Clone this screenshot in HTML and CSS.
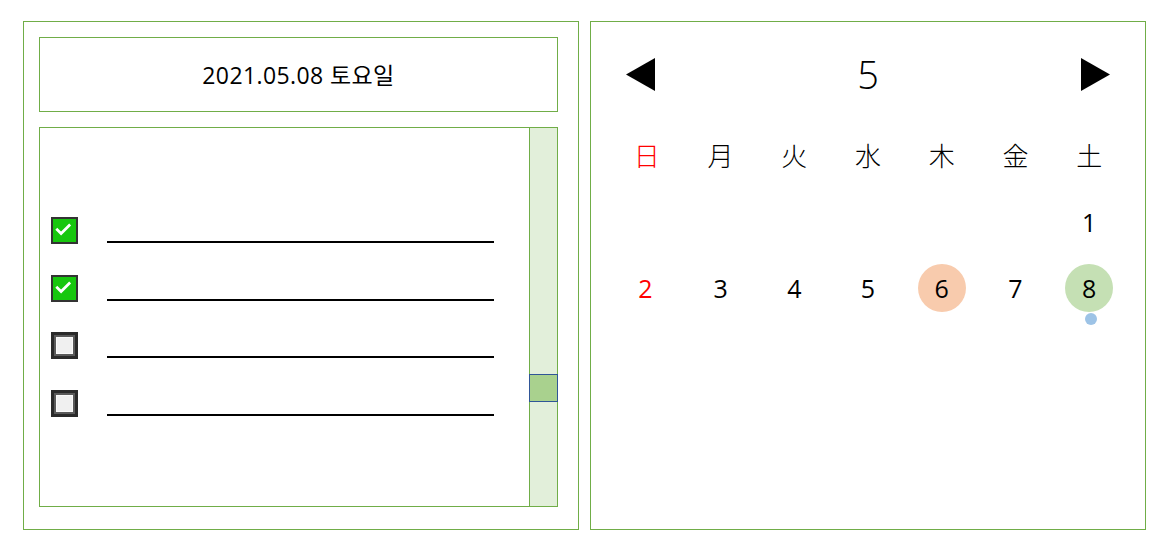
FILE: index.html
```html
<!DOCTYPE html>
<html lang="ko">
<head>
  <meta charset="UTF-8">
  <meta name="viewport" content="width=device-width, initial-scale=1.0">
  <title>할 일 달력</title>
  <link rel="stylesheet" href="styles.css">
</head>
<body>
  <div class="panel day-panel">
    <div class="date-box">2021.05.08 토요일</div>
    <div class="todo-box">
      <ul class="todo-list">
        <li class="todo">
          <span class="check done">
            <svg viewBox="0 0 27 27" width="23" height="23"><path d="M5 12.5 L9.5 17 L19 7.5" fill="none" stroke="#fff" stroke-width="3.2" stroke-linecap="square"/></svg>
          </span>
          <span class="line"></span>
        </li>
        <li class="todo">
          <span class="check done">
            <svg viewBox="0 0 27 27" width="23" height="23"><path d="M5 12.5 L9.5 17 L19 7.5" fill="none" stroke="#fff" stroke-width="3.2" stroke-linecap="square"/></svg>
          </span>
          <span class="line"></span>
        </li>
        <li class="todo">
          <span class="check"></span>
          <span class="line"></span>
        </li>
        <li class="todo">
          <span class="check"></span>
          <span class="line"></span>
        </li>
      </ul>
      <div class="scrollbar">
        <div class="thumb"></div>
      </div>
    </div>
  </div>

  <div class="panel cal-panel">
    <div class="cal-head">
      <svg class="arrow" viewBox="0 0 29 33" width="29" height="33"><polygon points="29,0 29,33 0,16.5" fill="#000"/></svg>
      <div class="month">5</div>
      <svg class="arrow" viewBox="0 0 29 33" width="29" height="33"><polygon points="0,0 0,33 29,16.5" fill="#000"/></svg>
    </div>
    <div class="cal-grid">
      <div class="cell wd sun">日</div>
      <div class="cell wd">月</div>
      <div class="cell wd">火</div>
      <div class="cell wd">水</div>
      <div class="cell wd">木</div>
      <div class="cell wd">金</div>
      <div class="cell wd">土</div>

      <div class="cell"></div>
      <div class="cell"></div>
      <div class="cell"></div>
      <div class="cell"></div>
      <div class="cell"></div>
      <div class="cell"></div>
      <div class="cell num">1</div>

      <div class="cell num sun">2</div>
      <div class="cell num">3</div>
      <div class="cell num">4</div>
      <div class="cell num">5</div>
      <div class="cell num"><span class="day mark">6</span></div>
      <div class="cell num">7</div>
      <div class="cell num"><span class="day today">8<i class="dot"></i></span></div>
    </div>
  </div>
</body>
</html>
```

FILE: styles.css
```css
html, body {
  margin: 0;
  background: #fff;
  color: #000;
  font-family: "Open Sans", "Noto Sans CJK KR", sans-serif;
}
body {
  display: flex;
  gap: 11px;
  padding: 21px 24px 24px 23px;
}
.panel {
  box-sizing: border-box;
  width: 556px;
  height: 509px;
  border: 1px solid #70ad47;
}

/* left : day + todo */
.day-panel {
  padding: 15px 20px 0 15px;
}
.date-box {
  box-sizing: border-box;
  height: 75px;
  border: 1px solid #70ad47;
  display: flex;
  justify-content: center;
  align-items: center;
  font-size: 23px;
  letter-spacing: 0.4px;
  padding-bottom: 1px;
}
.todo-box {
  box-sizing: border-box;
  height: 380px;
  margin-top: 15px;
  border: 1px solid #70ad47;
  display: flex;
}
.todo-list {
  flex: 1;
  list-style: none;
  margin: 0;
  padding: 89px 0 0 11px;
  display: flex;
  flex-direction: column;
  gap: 30.7px;
}
.todo {
  display: flex;
  align-items: flex-end;
  gap: 29px;
}
.check {
  box-sizing: border-box;
  width: 27px;
  height: 27px;
  border: 3px solid #2a2a2a;
  background: #f0f0f0;
  box-shadow: inset 0 0 0 2px #5a5a5a, inset 0 0 0 3px #fafafa;
  display: flex;
  align-items: center;
  justify-content: center;
}
.check.done {
  border: 2px solid #333;
  background: #17c70e;
  box-shadow: none;
}
.line {
  width: 387px;
  height: 2px;
  margin-bottom: 1px;
  background: #000;
}
.scrollbar {
  position: relative;
  width: 27px;
  border-left: 1px solid #70ad47;
  background: #e2efda;
}
.thumb {
  position: absolute;
  top: 246px;
  left: -1px;
  right: -1px;
  height: 28px;
  box-sizing: border-box;
  border: 1px solid #2f5597;
  background: #a9d18e;
}

/* right : calendar */
.cal-panel {
  padding: 36px 19px 0;
}
.cal-head {
  display: flex;
  justify-content: space-between;
  align-items: center;
  height: 33px;
  padding: 0 16px;
}
.arrow {
  display: block;
}
.month {
  font-size: 38px;
  font-weight: 300;
  line-height: 33px;
}
.cal-grid {
  display: grid;
  grid-template-columns: repeat(7, 1fr);
  grid-auto-rows: 66px;
  margin-top: 32px;
}
.cell {
  display: flex;
  justify-content: center;
  align-items: center;
  font-size: 25px;
}
.wd {
  font-family: "Noto Sans CJK JP", sans-serif;
  font-weight: 300;
  font-size: 26px;
  padding-bottom: 3px;
}
.sun {
  color: #ff0000;
}
.num.sun {
  padding-right: 3px;
}
.day {
  position: relative;
  width: 48px;
  height: 48px;
  border-radius: 50%;
  display: flex;
  justify-content: center;
  align-items: center;
}
.mark {
  background: #f8cbad;
}
.today {
  background: #c5e0b4;
}
.dot {
  position: absolute;
  left: 20px;
  top: 49px;
  width: 12px;
  height: 12px;
  border-radius: 50%;
  background: #9dc3e6;
}
```
